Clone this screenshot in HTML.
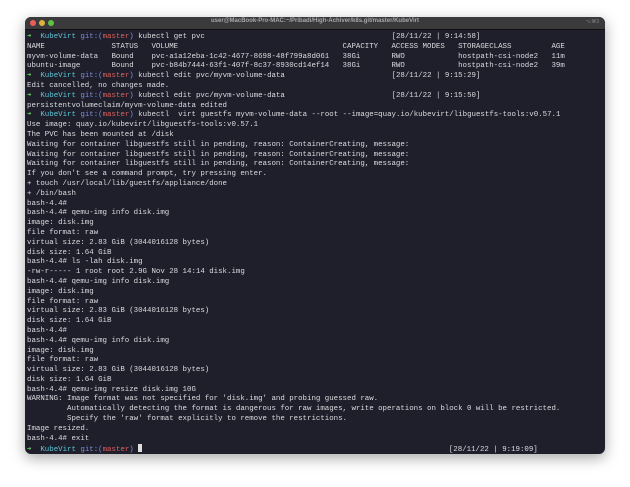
<!DOCTYPE html>
<html><head><meta charset="utf-8"><style>
body{margin:0;width:630px;height:487px;background:#fff;overflow:hidden;position:relative}
.win{position:absolute;left:25px;top:17px;width:580px;height:437px;background:#1e1f2b;border-radius:6px;box-shadow:0 4px 14px rgba(0,0,0,.35);overflow:hidden}
.tb{height:12px;background:#3a393b;position:relative;border-bottom:1px solid #111}
.d{position:absolute;top:3px;width:6px;height:6px;border-radius:50%}
.tt{position:absolute;left:0;right:0;top:1px;text-align:center;font:bold 6px "Liberation Sans",sans-serif;color:#a9a8a9}
.tr{position:absolute;right:6px;top:2px;font:5px "Liberation Sans",sans-serif;color:#8a898a}
pre{position:absolute;left:2px;top:16px;margin:0;font:7.42px/9.8px "Liberation Mono",monospace;color:#dcdce0;white-space:pre}
.g{color:#5ed45e}.c{color:#5ec8d8}.b{color:#7f8ee0}.r{color:#e2605a}
.cur{display:inline-block;width:4px;height:8px;background:#ddd;vertical-align:-1px}
</style></head><body>
<div class="win">
<div class="tb"><div class="d" style="left:5px;background:#ec5f57"></div><div class="d" style="left:14px;background:#e0b23c"></div><div class="d" style="left:23px;background:#5bc443"></div>
<div class="tt">user@MacBook-Pro-MAC:~/Pribadi/High-Achiver/k8s.git/master/KubeVirt</div><div class="tr">⌥⌘3</div></div>
<pre><span class="g">➜</span>  <span class="c">KubeVirt</span> <span class="b">git:(</span><span class="r">master</span><span class="b">)</span> kubectl get pvc                                          [28/11/22 | 9:14:58]
NAME               STATUS   VOLUME                                     CAPACITY   ACCESS MODES   STORAGECLASS         AGE
myvm-volume-data   Bound    pvc-a1a12eba-1c42-4677-8698-48f799a8d061   38Gi       RWO            hostpath-csi-node2   11m
ubuntu-image       Bound    pvc-b84b7444-63f1-407f-8c37-8930cd14ef14   38Gi       RWO            hostpath-csi-node2   39m
<span class="g">➜</span>  <span class="c">KubeVirt</span> <span class="b">git:(</span><span class="r">master</span><span class="b">)</span> kubectl edit pvc/myvm-volume-data                        [28/11/22 | 9:15:29]
Edit cancelled, no changes made.
<span class="g">➜</span>  <span class="c">KubeVirt</span> <span class="b">git:(</span><span class="r">master</span><span class="b">)</span> kubectl edit pvc/myvm-volume-data                        [28/11/22 | 9:15:50]
persistentvolumeclaim/myvm-volume-data edited
<span class="g">➜</span>  <span class="c">KubeVirt</span> <span class="b">git:(</span><span class="r">master</span><span class="b">)</span> kubectl  virt guestfs myvm-volume-data --root --image=quay.io/kubevirt/libguestfs-tools:v0.57.1
Use image: quay.io/kubevirt/libguestfs-tools:v0.57.1
The PVC has been mounted at /disk
Waiting for container libguestfs still in pending, reason: ContainerCreating, message:
Waiting for container libguestfs still in pending, reason: ContainerCreating, message:
Waiting for container libguestfs still in pending, reason: ContainerCreating, message:
If you don't see a command prompt, try pressing enter.
+ touch /usr/local/lib/guestfs/appliance/done
+ /bin/bash
bash-4.4#
bash-4.4# qemu-img info disk.img
image: disk.img
file format: raw
virtual size: 2.83 GiB (3044016128 bytes)
disk size: 1.64 GiB
bash-4.4# ls -lah disk.img
-rw-r----- 1 root root 2.9G Nov 28 14:14 disk.img
bash-4.4# qemu-img info disk.img
image: disk.img
file format: raw
virtual size: 2.83 GiB (3044016128 bytes)
disk size: 1.64 GiB
bash-4.4#
bash-4.4# qemu-img info disk.img
image: disk.img
file format: raw
virtual size: 2.83 GiB (3044016128 bytes)
disk size: 1.64 GiB
bash-4.4# qemu-img resize disk.img 10G
WARNING: Image format was not specified for 'disk.img' and probing guessed raw.
         Automatically detecting the format is dangerous for raw images, write operations on block 0 will be restricted.
         Specify the 'raw' format explicitly to remove the restrictions.
Image resized.
bash-4.4# exit
<span class="g">➜</span>  <span class="c">KubeVirt</span> <span class="b">git:(</span><span class="r">master</span><span class="b">)</span> <span class="cur"></span>                                                                     [28/11/22 | 9:19:09]</pre>
</div>
</body></html>
